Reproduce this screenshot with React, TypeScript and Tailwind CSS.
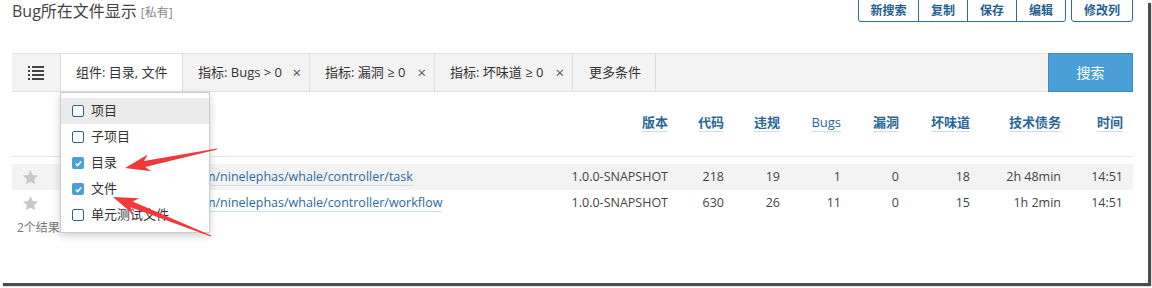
import React from 'react';

const cols = [
  { k: '版本', w: 'w-[120px]' },
  { k: '代码', w: 'w-[56px]' },
  { k: '违规', w: 'w-[56px]' },
  { k: 'Bugs', w: 'w-[61px]' },
  { k: '漏洞', w: 'w-[58px]' },
  { k: '坏味道', w: 'w-[71px]' },
  { k: '技术债务', w: 'w-[91px]' },
  { k: '时间', w: 'w-[62px]' },
];

const rows = [
  { path: 'src/main/java/com/ninelephas/whale/controller/task', v: ['1.0.0-SNAPSHOT', '218', '19', '1', '0', '18', '2h 48min', '14:51'] },
  { path: 'src/main/java/com/ninelephas/whale/controller/workflow', v: ['1.0.0-SNAPSHOT', '630', '26', '11', '0', '15', '1h 2min', '14:51'] },
];

const options = [
  { t: '项目', on: false },
  { t: '子项目', on: false },
  { t: '目录', on: true },
  { t: '文件', on: true },
  { t: '单元测试文件', on: false },
];

const ListIcon = () => (
  <svg width="16" height="14" viewBox="0 0 16 14" fill="#444">
    <rect x="0" y="0" width="2" height="2" />
    <rect x="4" y="0" width="12" height="2" />
    <rect x="0" y="4" width="2" height="2" />
    <rect x="4" y="4" width="12" height="2" />
    <rect x="0" y="8" width="2" height="2" />
    <rect x="4" y="8" width="12" height="2" />
    <rect x="0" y="12" width="2" height="2" />
    <rect x="4" y="12" width="12" height="2" />
  </svg>
);

const Star = () => (
  <svg width="17" height="17" viewBox="0 0 24 24" fill="#c9c9c9">
    <path d="M12 1.5l3.2 6.9 7.5.8-5.6 5.1 1.6 7.4L12 17.9l-6.7 3.8 1.6-7.4-5.6-5.1 7.5-.8z" />
  </svg>
);

const Check = ({ on }: { on: boolean }) =>
  on ? (
    <span className="flex h-[12px] w-[12px] items-center justify-center rounded-[2px] bg-[#4a9fd6]">
      <svg width="9" height="9" viewBox="0 0 10 10">
        <path d="M2 5.2l2 2 4-4.4" stroke="#fff" strokeWidth="1.8" fill="none" />
      </svg>
    </span>
  ) : (
    <span className="h-[12px] w-[12px] rounded-[2px] border-[1.5px] border-[#2a6496] bg-white" />
  );

// red callout arrow, tail at (x1,y1), tip at (x2,y2)
const Arrow = ({ x1, y1, x2, y2 }: { x1: number; y1: number; x2: number; y2: number }) => {
  const L = Math.hypot(x2 - x1, y2 - y1);
  const a = (Math.atan2(y2 - y1, x2 - x1) * 180) / Math.PI;
  const pts = `0,-0.6 ${L - 20},-3 ${L - 25},-8.5 ${L},0 ${L - 25},8.5 ${L - 20},3 0,0.6`;
  return <polygon points={pts} fill="#f03a3a" transform={`translate(${x1} ${y1}) rotate(${a})`} />;
};

export default function App() {
  return (
    <div className="h-[288px] w-[1152px] bg-white font-['Open_Sans','Noto_Sans_CJK_SC',sans-serif] text-[13px] text-[#333]">
      <div className="relative h-[283px] w-[1148px] overflow-hidden bg-white shadow-[3px_3px_1px_rgba(0,0,0,0.7)]">
        <div className="ml-[12px] w-[1121px]">
          {/* title + actions */}
          <div className="-mt-px flex h-[23px] items-start justify-between">
            <div className="mt-px flex items-baseline leading-[22px]">
              <span className="text-[16px] text-[#444]">Bug所在文件显示</span>
              <span className="ml-[4px] text-[12px] text-[#888]">[私有]</span>
            </div>
            <div className="flex h-[23px]">
              <div className="flex overflow-hidden rounded-b-[3px] border border-[#2d6c9c]">
                {['新搜索', '复制', '保存', '编辑'].map((t, i) => (
                  <button
                    key={t}
                    className={`h-full text-[12px] font-bold text-[#23608f] ${i === 0 ? 'w-[59px]' : 'w-[49px] border-l border-[#2d6c9c]'}`}
                  >
                    {t}
                  </button>
                ))}
              </div>
              <button className="ml-[5px] h-full w-[62px] rounded-b-[3px] border border-[#2d6c9c] text-[12px] font-bold text-[#23608f]">
                修改列
              </button>
            </div>
          </div>

          {/* filter bar */}
          <div className="mt-[31px] flex h-[39px] border-y border-[#e2e2e2] bg-[#f3f3f3]">
            <div className="flex w-[48px] items-center justify-center">
              <ListIcon />
            </div>
            <div className="flex w-[123px] items-center border-x border-[#dcdcdc] bg-white pl-[15px]">组件: 目录, 文件</div>
            <div className="flex w-[127px] items-center justify-between border-r border-[#dddddd] pl-[15px] pr-[8px]">
              <span>指标: Bugs &gt; 0</span>
              <span className="text-[15px] text-[#555]">×</span>
            </div>
            <div className="flex w-[125px] items-center justify-between border-r border-[#dddddd] pl-[15px] pr-[8px]">
              <span>指标: 漏洞 ≥ 0</span>
              <span className="text-[15px] text-[#555]">×</span>
            </div>
            <div className="flex w-[138px] items-center justify-between border-r border-[#dddddd] pl-[15px] pr-[8px]">
              <span>指标: 坏味道 ≥ 0</span>
              <span className="text-[15px] text-[#555]">×</span>
            </div>
            <div className="flex w-[83px] items-center border-r border-[#dddddd] pl-[16px]">更多条件</div>
            <button className="-my-px ml-auto w-[85px] border border-[#3b8cc2] bg-[#4a9fd6] text-[14px] text-white">搜索</button>
          </div>

          {/* table header */}
          <div className="flex h-[65px] items-start border-b border-[#e6e6e6] pt-[21px] pr-[10px]">
            <div className="w-[38px]" />
            <div className="flex-1" />
            {cols.map((c) => (
              <div key={c.k} className={`${c.w} text-right`}>
                <span className={`border-b border-[#c4e0f3] leading-[18px] text-[#2a6797] ${c.k === 'Bugs' ? '' : 'font-bold'}`}>
                  {c.k}
                </span>
              </div>
            ))}
          </div>

          {/* rows */}
          <div className="mt-[7px] text-[12.5px]">
            {rows.map((r, i) => (
              <div key={r.path} className={`flex h-[26px] items-center pr-[10px] ${i === 0 ? 'bg-[#f3f3f3]' : ''}`}>
                <div className="w-[38px] pl-[10px]">
                  <Star />
                </div>
                <div className="flex-1 whitespace-nowrap pl-[57px]">
                  <span className="border-b border-[#c4e0f3] text-[#2a6aa0]">{r.path}</span>
                </div>
                {r.v.map((v, j) => (
                  <div key={j} className={`${cols[j].w} text-right text-[#444]`}>
                    {v}
                  </div>
                ))}
              </div>
            ))}
          </div>

          <div className="mt-[4px] pl-[5px] text-[12px] leading-[16px] text-[#777]">2个结果</div>
        </div>

        {/* component dropdown */}
        <div className="absolute left-[60px] top-[92px] h-[141px] w-[150px] border border-[#cccccc] bg-white pt-[5px] shadow-[0_3px_8px_rgba(0,0,0,0.18)]">
          {options.map((o, i) => (
            <div key={o.t} className={`flex h-[26px] items-center gap-[7px] pl-[11px] ${i === 0 ? 'bg-[#ebebeb]' : ''}`}>
              <Check on={o.on} />
              <span>{o.t}</span>
            </div>
          ))}
        </div>

        <svg className="pointer-events-none absolute left-0 top-0" width="1148" height="283">
          <Arrow x1={217} y1={149} x2={125} y2={168} />
          <Arrow x1={211} y1={236} x2={113} y2={197} />
        </svg>
      </div>
    </div>
  );
}
